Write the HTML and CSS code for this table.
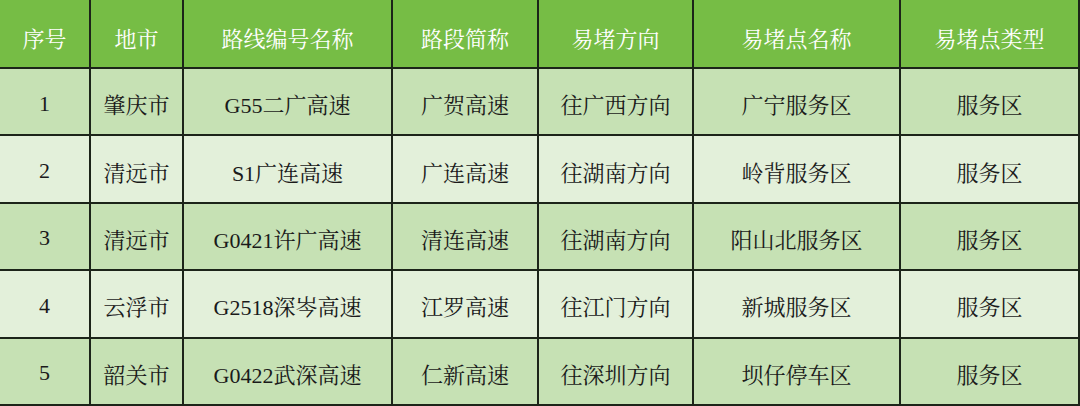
FILE: index.html
```html
<!DOCTYPE html>
<html lang="zh">
<head>
<meta charset="utf-8">
<link rel="stylesheet" href="styles.css">
</head>
<body>
<div class="grid">
  <div class="cell head">序号</div><div class="cell head">地市</div><div class="cell head">路线编号名称</div><div class="cell head">路段简称</div><div class="cell head">易堵方向</div><div class="cell head">易堵点名称</div><div class="cell head">易堵点类型</div>

  <div class="cell odd">1</div><div class="cell odd">肇庆市</div><div class="cell odd">G55二广高速</div><div class="cell odd">广贺高速</div><div class="cell odd">往广西方向</div><div class="cell odd">广宁服务区</div><div class="cell odd">服务区</div>

  <div class="cell even">2</div><div class="cell even">清远市</div><div class="cell even">S1广连高速</div><div class="cell even">广连高速</div><div class="cell even">往湖南方向</div><div class="cell even">岭背服务区</div><div class="cell even">服务区</div>

  <div class="cell odd">3</div><div class="cell odd">清远市</div><div class="cell odd">G0421许广高速</div><div class="cell odd">清连高速</div><div class="cell odd">往湖南方向</div><div class="cell odd">阳山北服务区</div><div class="cell odd">服务区</div>

  <div class="cell even">4</div><div class="cell even">云浮市</div><div class="cell even">G2518深岑高速</div><div class="cell even">江罗高速</div><div class="cell even">往江门方向</div><div class="cell even">新城服务区</div><div class="cell even">服务区</div>

  <div class="cell odd">5</div><div class="cell odd">韶关市</div><div class="cell odd">G0422武深高速</div><div class="cell odd">仁新高速</div><div class="cell odd">往深圳方向</div><div class="cell odd">坝仔停车区</div><div class="cell odd">服务区</div>
</div>
</body>
</html>
```

FILE: styles.css
```css
html, body {
  margin: 0;
  padding: 0;
  background: #ffffff;
}

.grid {
  display: grid;
  width: 1080px;
  grid-template-columns: 91px 93px 209px 146px 155px 207px 179px;
  grid-template-rows: 69px repeat(5, 67.4px);
  font-family: "Liberation Serif", "Noto Serif CJK SC", "Noto Sans CJK SC", serif;
  font-size: 22px;
}

.cell {
  box-sizing: border-box;
  border-right: 2px solid #1c2419;
  border-bottom: 2px solid #1c2419;
  display: flex;
  align-items: center;
  justify-content: center;
  padding-top: 4px;
  color: #1a1a1a;
  white-space: nowrap;
}

.head {
  background: #76bd45;
  color: #ffffff;
  padding-top: 8px;
}

.odd {
  background: #c6e1b4;
}

.even {
  background: #e3f0da;
}
```
